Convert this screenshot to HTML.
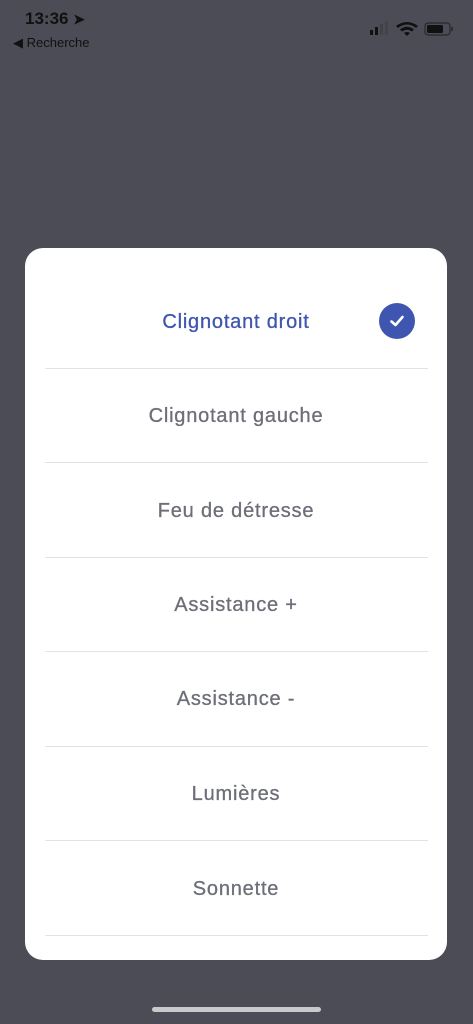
<!DOCTYPE html>
<html><head><meta charset="utf-8"><style>
body{margin:0;width:473px;height:1024px;background:#4b4c55;position:relative;overflow:hidden;font-family:"Liberation Sans",sans-serif}
.t{position:absolute;color:#111;font-weight:bold}
.card{position:absolute;left:25px;top:248px;width:422px;height:712px;background:#fff;border-radius:18px}
.row{position:absolute;left:0;width:422px;text-align:center;font-size:20px;color:#6d6f78;line-height:24px;letter-spacing:0.8px;-webkit-text-stroke:0.3px currentColor}
.line{position:absolute;left:20px;width:383px;height:1px;background:#e2e2e5}
.home{position:absolute;left:152px;top:1007px;width:169px;height:5px;border-radius:3px;background:#c9c9cc}
</style></head><body>
<div class="t" style="left:25px;top:9px;font-size:17px">13:36 <span style="font-size:14px">➤</span></div>
<div class="t" style="left:13px;top:35px;font-size:13px;font-weight:normal;color:#111">◀ Recherche</div>
<svg style="position:absolute;left:370px;top:20px" width="90" height="18">
<rect x="0" y="10" width="3" height="5" fill="#111"/><rect x="5" y="7" width="3" height="8" fill="#111"/><rect x="10" y="4" width="3" height="11" fill="#333" opacity=".4"/><rect x="15" y="1" width="3" height="14" fill="#333" opacity=".3"/>
<path d="M26 6 Q37 -2 48 6 L46 8 Q37 1 28 8Z M30 9.5 Q37 4 44 9.5 L42 11.5 Q37 8 32 11.5Z M34 13 L37 16 L40 13 Q37 11 34 13Z" fill="#111"/>
<rect x="55" y="3" width="25" height="12" rx="3" fill="none" stroke="#111" stroke-width="1.2" opacity=".6"/><rect x="57" y="5" width="16" height="8" rx="1.5" fill="#111"/><rect x="81" y="7" width="2" height="4" fill="#111" opacity=".5"/>
</svg>
<div class="card">
<div class="row" style="top:62px;color:#3f56b0">Clignotant droit</div>
<svg style="position:absolute;left:354px;top:55px" width="36" height="36"><circle cx="18" cy="18" r="18" fill="#3f56b0"/><path d="M12.5 18.5 L16.5 22 L23.5 14" stroke="#fff" stroke-width="2.6" fill="none" stroke-linecap="round" stroke-linejoin="round"/></svg>
<div class="line" style="top:120px"></div>
<div class="row" style="top:156px">Clignotant gauche</div>
<div class="line" style="top:214px"></div>
<div class="row" style="top:251px">Feu de détresse</div>
<div class="line" style="top:309px"></div>
<div class="row" style="top:345px">Assistance +</div>
<div class="line" style="top:403px"></div>
<div class="row" style="top:439px">Assistance -</div>
<div class="line" style="top:498px"></div>
<div class="row" style="top:534px">Lumières</div>
<div class="line" style="top:592px"></div>
<div class="row" style="top:629px">Sonnette</div>
<div class="line" style="top:687px"></div>
</div>
<div class="home"></div>
</body></html>
